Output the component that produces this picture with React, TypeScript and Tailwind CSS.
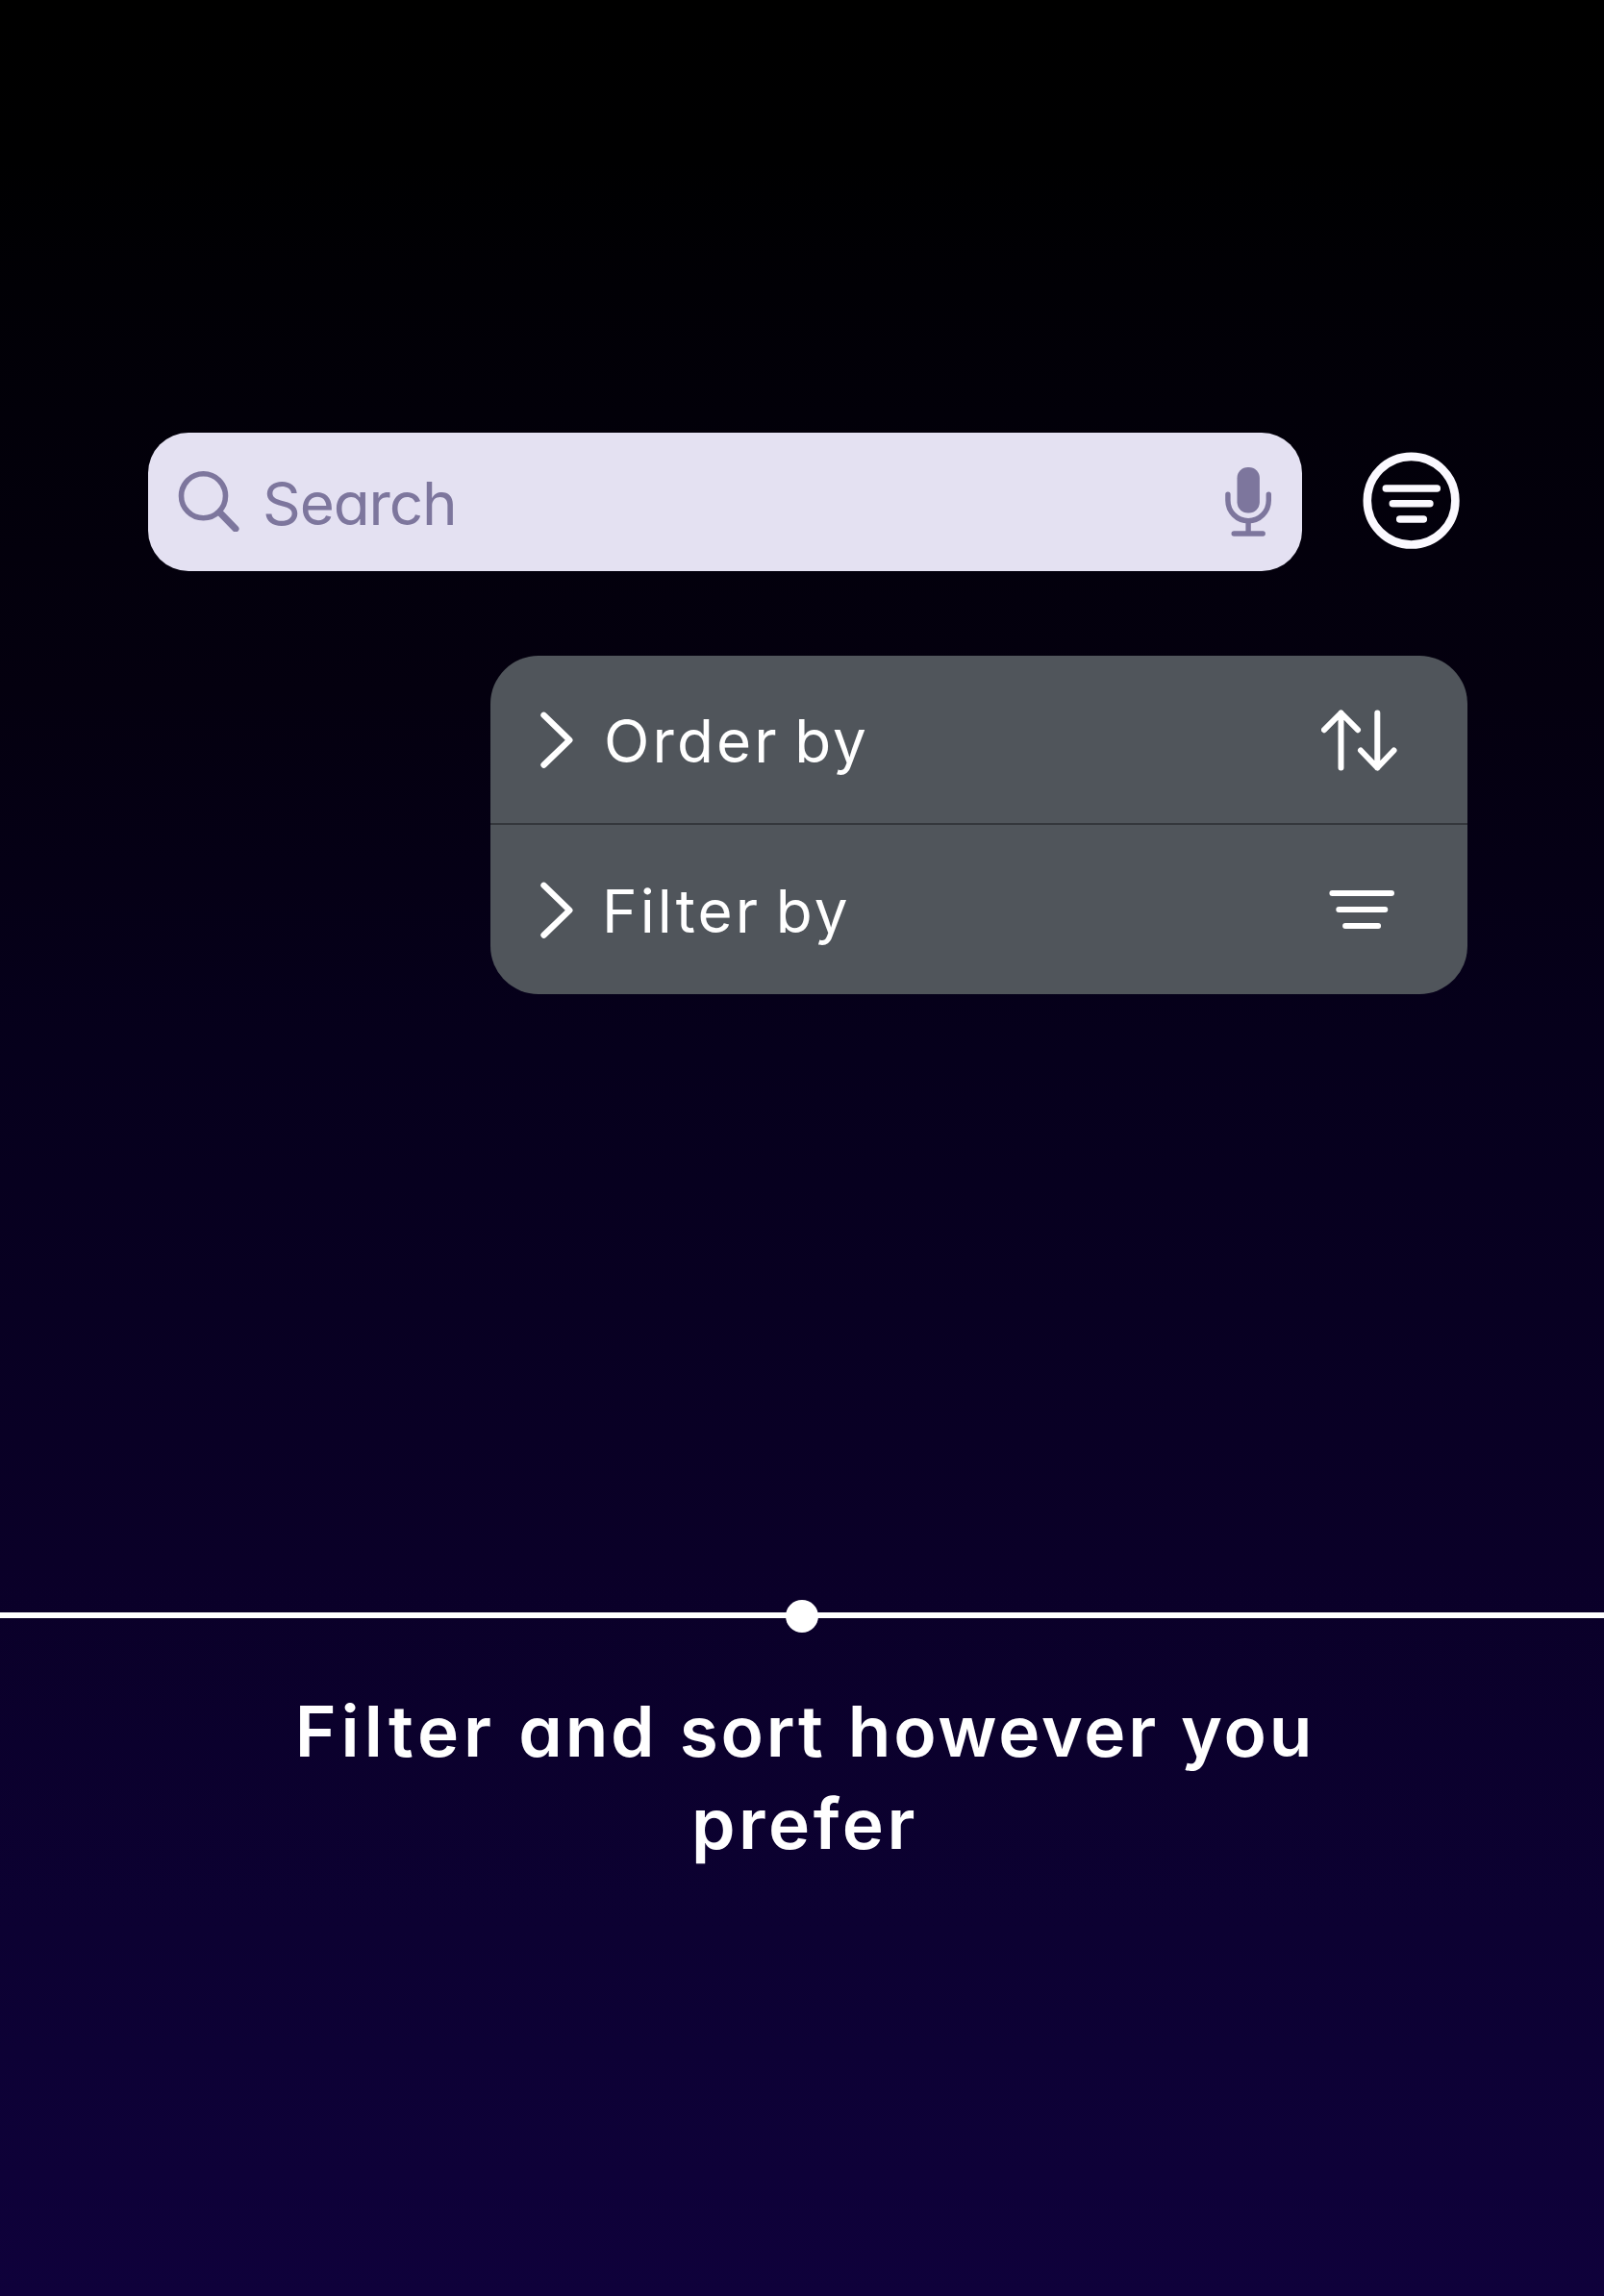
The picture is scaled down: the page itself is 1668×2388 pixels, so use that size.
import type { ReactNode } from "react";

function SearchIcon() {
  return (
    <svg className="-mt-[4px] ml-[30px] h-[66px] w-[66px] shrink-0" viewBox="184 487 66 66" fill="none" stroke="#7d769d" strokeLinecap="round">
      <circle cx="211.5" cy="515.8" r="23" strokeWidth="5.6" />
      <path d="M229 533.5L245 550" strokeWidth="7" />
    </svg>
  );
}

function MicIcon() {
  return (
    <svg className="mr-[30px] ml-auto h-[76px] w-[52px] shrink-0" viewBox="1272 484 52 76" fill="none" stroke="#7d769d" strokeLinecap="round" strokeWidth="5.4">
      <rect x="1286.5" y="486" width="23.4" height="47.5" rx="11.2" fill="#7d769d" stroke="none" />
      <path d="M1276.9 514.3v6.2a21.2 21.2 0 0 0 42.4 0v-6.2M1298.1 542v12M1283.2 555h30" />
    </svg>
  );
}

function FilterCircleIcon() {
  return (
    <svg className="-mt-[4px] ml-[62px] h-[104px] w-[104px] shrink-0" viewBox="1416 468 104 104" fill="none" stroke="#fbf9ff" strokeLinecap="round">
      <circle cx="1467.6" cy="520.7" r="45.8" strokeWidth="8.6" />
      <path d="M1441.3 508h53M1448.3 523.8h38.6M1455.7 540h24.6" strokeWidth="7.5" />
    </svg>
  );
}

function Chevron() {
  return (
    <svg className="ml-[50px] h-[60px] w-[36px] shrink-0" viewBox="560 739 36 60" fill="none" stroke="white" strokeLinecap="round" strokeLinejoin="round" strokeWidth="6.4">
      <path d="M565.5 743.8L592.3 769.7L565.5 795.6" />
    </svg>
  );
}

function SortIcon() {
  return (
    <svg className="mr-[72px] ml-auto h-[68px] w-[80px] shrink-0" viewBox="1374 735 80 68" fill="none" stroke="white" strokeLinecap="round" strokeLinejoin="round" strokeWidth="6">
      <path d="M1394.5 798.5V741.5M1377 759.2L1394.5 741.5L1412 759.2M1432.3 741.5V798.5M1415 780.5L1432.3 798.5L1449.5 780.5" />
    </svg>
  );
}

function LinesIcon() {
  return (
    <svg className="mr-[72px] ml-auto h-[44px] w-[74px] shrink-0" viewBox="1380 924 74 44" fill="none" stroke="white" strokeLinecap="round" strokeWidth="6">
      <path d="M1385.4 929h61.6M1392.3 946h48M1399.1 963h34" />
    </svg>
  );
}

function MenuRow({ label, icon, className }: { label: string; icon: ReactNode; className: string }) {
  return (
    <div className={`flex items-center ${className}`}>
      <Chevron />
      <span className="pt-[4px] text-[62px] leading-none tracking-[3.1px] whitespace-nowrap [word-spacing:-5px]">{label}</span>
      {icon}
    </div>
  );
}

export default function App() {
  return (
    <main className="flex h-[2388px] w-[1668px] flex-col overflow-hidden bg-[linear-gradient(180deg,#000000_0%,#000001_7%,#020009_18%,#04000f_30%,#06001c_46%,#0a0028_68%,#0c0132_84%,#0f013b_100%)] pt-[450px] font-['Inter',sans-serif] text-white [font-feature-settings:'cv11']">
      <div className="ml-[154px] flex items-center">
        <div className="flex h-[144px] w-[1200px] items-center rounded-[42px] bg-[#e4e1f2]">
          <SearchIcon />
          <span className="ml-[23px] pt-[3px] text-[62px] leading-none tracking-[-1.1px] whitespace-nowrap text-[#7d769d]">Search</span>
          <MicIcon />
        </div>
        <FilterCircleIcon />
      </div>

      <div className="mt-[88px] ml-[510px] h-[352px] w-[1016px] overflow-hidden rounded-[50px] bg-[#50555b]">
        <MenuRow className="h-[176px] gap-[32px] border-b-2 border-[#34373c]" label="Order by" icon={<SortIcon />} />
        <MenuRow className="h-[176px] gap-[30px]" label="Filter by" icon={<LinesIcon />} />
      </div>

      <div className="mt-[630px] flex h-[34px] items-center">
        <div className="-mt-[2px] h-[6px] flex-1 bg-white" />
        <div className="-mx-px size-[34px] rounded-full bg-white" />
        <div className="-mt-[2px] h-[6px] flex-1 bg-white" />
      </div>

      <h1 className="mt-[55px] pl-[6px] text-center text-[73px] leading-[96px] font-semibold tracking-[2.8px] [word-spacing:2px]">
        <span className="block whitespace-nowrap">
          <span className="tracking-[5px]">Filter</span> and sort however you
        </span>
        <span className="block tracking-[3.5px] whitespace-nowrap">prefer</span>
      </h1>
    </main>
  );
}
